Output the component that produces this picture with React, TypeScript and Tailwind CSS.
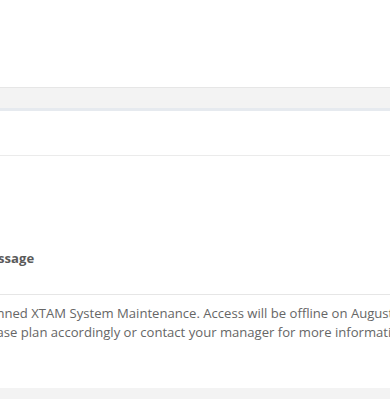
export default function App() {
  return (
    <div className="w-[390px] h-[399px] overflow-hidden bg-white" style={{ fontFamily: '"Open Sans", sans-serif' }}>
      <div className="h-[87px]" />
      <div className="h-[21px] bg-[#f3f3f3] border-t border-[#e6e6e6]" />
      <div className="h-[3px] bg-[#e6eaef]" />
      <div className="h-[45px] border-b border-[#ebebeb]" />
      <div className="-ml-[22px] w-[900px] whitespace-nowrap">
        <div className="h-[93px]" />
        <div className="pb-[25px] border-b border-[#e6e6e6] text-[13.1px] font-bold text-[#5a5a5a]">Message</div>
        <div className="pt-[9px] text-[13.1px] leading-[19px] text-[#666]">
          <p>Planned XTAM System Maintenance. Access will be offline on August 15th from 8:00pm to 11:00pm.</p>
          <p>Please plan accordingly or contact your manager for more information.</p>
        </div>
      </div>
      <div className="mt-[46px] h-[20px] bg-[#f3f3f3]" />
    </div>
  );
}
